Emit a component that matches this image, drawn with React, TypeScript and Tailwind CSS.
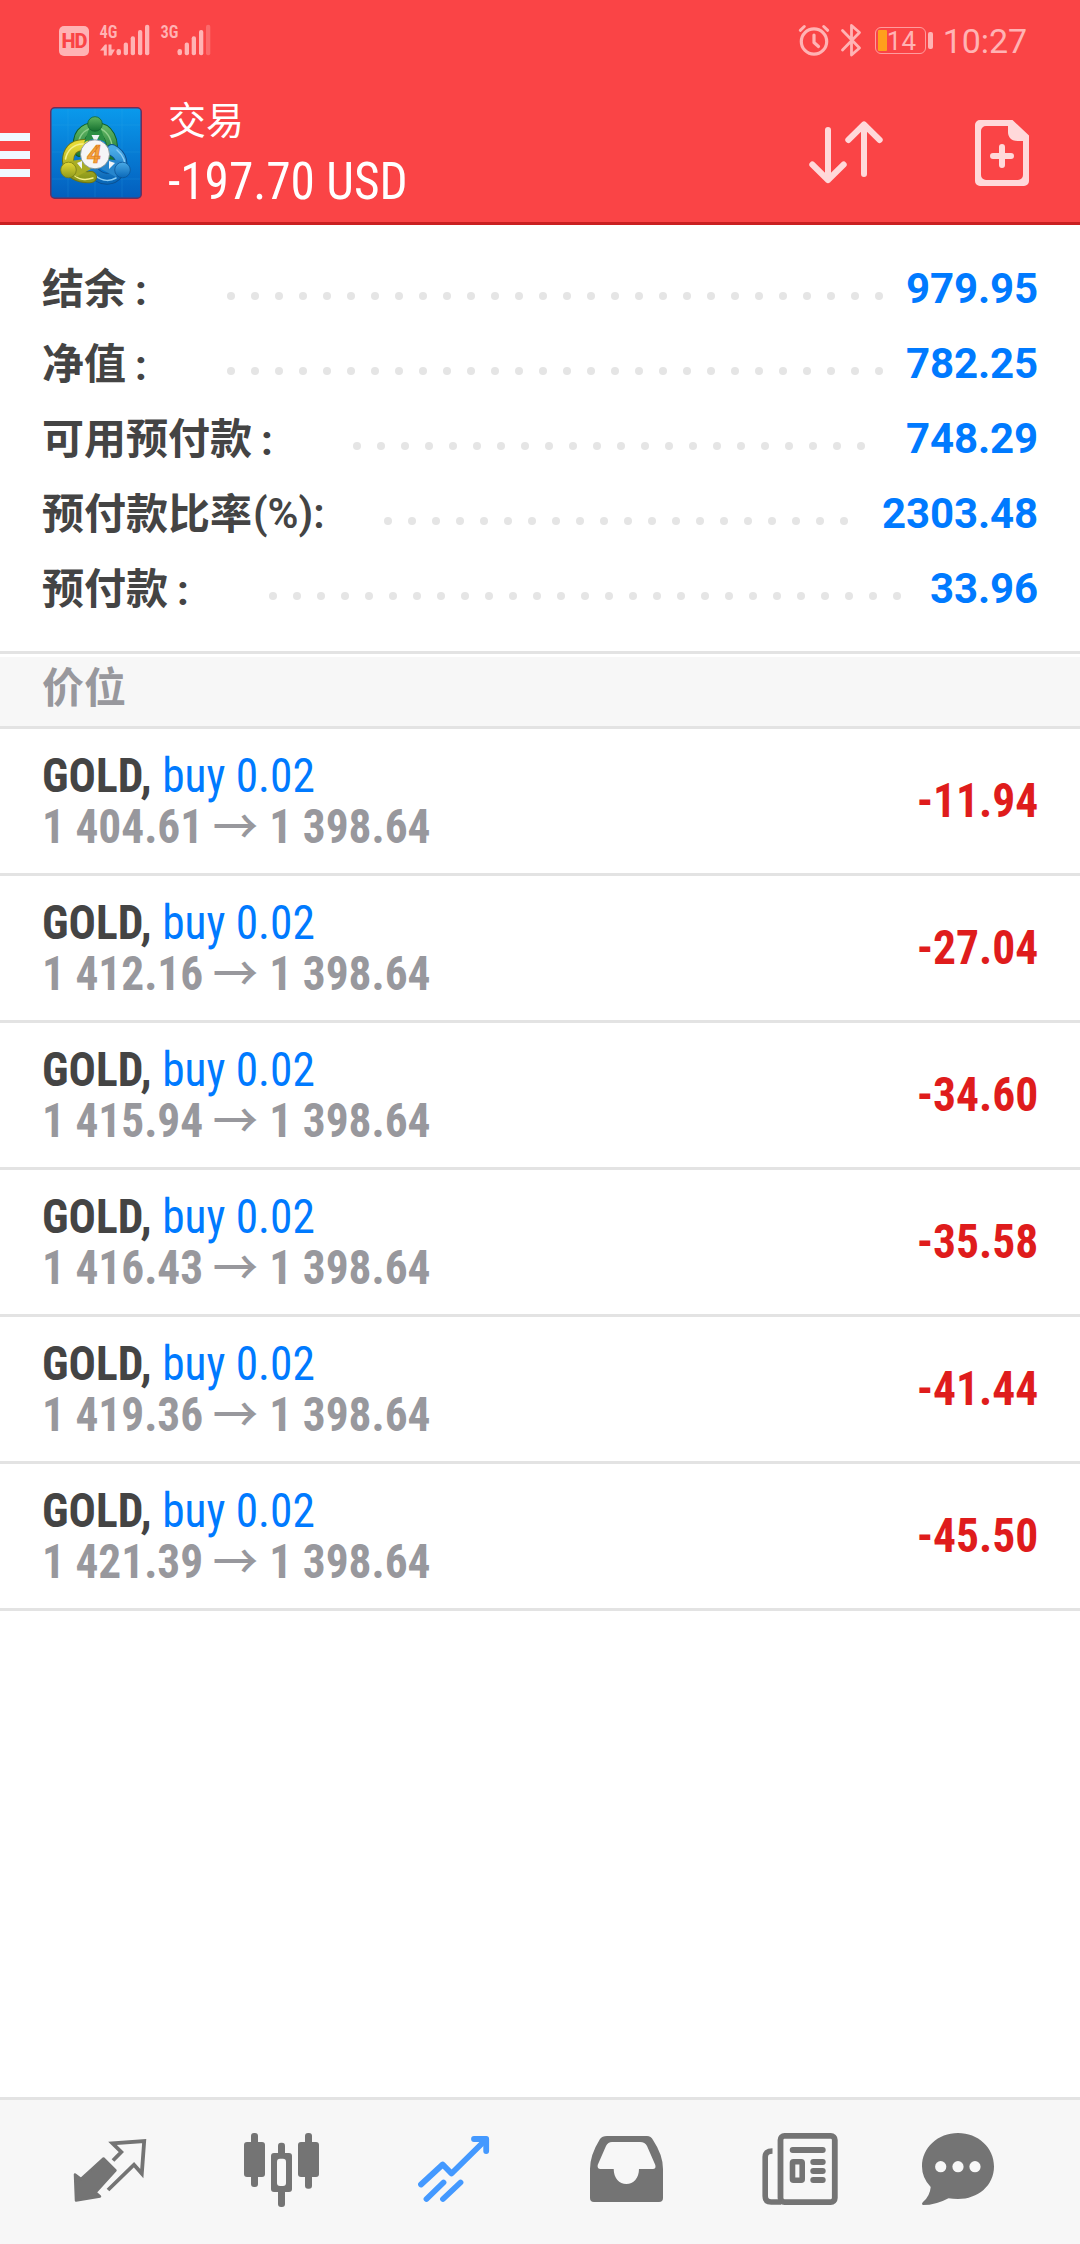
import type { ReactNode } from "react";

const SUMMARY = [
  { label: "结余", value: "979.95", dots: 28 },
  { label: "净值", value: "782.25", dots: 28 },
  { label: "可用预付款", value: "748.29", dots: 22 },
  { label: "预付款比率", suffix: "(%):", value: "2303.48", dots: 20 },
  { label: "预付款", value: "33.96", dots: 27 },
];

const POSITIONS = [
  { open: "1 404.61", current: "1 398.64", profit: "-11.94" },
  { open: "1 412.16", current: "1 398.64", profit: "-27.04" },
  { open: "1 415.94", current: "1 398.64", profit: "-34.60" },
  { open: "1 416.43", current: "1 398.64", profit: "-35.58" },
  { open: "1 419.36", current: "1 398.64", profit: "-41.44" },
  { open: "1 421.39", current: "1 398.64", profit: "-45.50" },
];

function Signal({ label, data, weak }: { label: string; data?: boolean; weak?: boolean }) {
  return (
    <svg className="overflow-visible" width="52" height="34" viewBox="0 0 52 34" fill="currentColor">
      <text
        x="0.5"
        y="15"
        className="font-['Roboto_Condensed'] text-[19px] font-semibold"
        textLength="18"
        lengthAdjust="spacingAndGlyphs"
      >
        {label}
      </text>
      {data && (
        <path d="M1 27.500L6 21.500h1.800v11H4.800v-5zM9.500 21.500h3v5H16L12.500 32.500h-3z" />
      )}
      <rect x="17.500" y="26" width="4.500" height="6.300" rx="2.200" />
      <rect x="24.700" y="19.500" width="4.300" height="12.800" rx="2" />
      <rect x="31.700" y="13.300" width="4.300" height="19" rx="2" />
      <rect x="39" y="7" width="4.300" height="25.300" rx="2" />
      <rect x="46" y="1.700" width="4.300" height="30.600" rx="2" opacity={weak ? 0.35 : 1} />
    </svg>
  );
}

function StatusBar() {
  return (
    <div className="flex h-[82px] items-start pt-[23px] pr-[53px] pl-[59px] font-[Roboto] text-[#ffb3b4]">
      <div className="mt-[3px] flex size-[30px] items-center justify-center rounded-[5px] bg-[#ffb3b4] text-[20px] leading-none font-extrabold tracking-[-1px] text-[#fa4446]">
        HD
      </div>
      <div className="ml-[10px] flex gap-[9px]">
        <Signal label="4G" data />
        <Signal label="3G" weak />
      </div>
      <div className="ml-auto flex items-start">
        <svg width="34" height="34" viewBox="0 0 34 34" fill="none" stroke="currentColor" strokeWidth="3.200" strokeLinecap="round">
          <circle cx="17" cy="18.500" r="12.700" />
          <path d="M17 12v7.500l4.500 4" strokeLinejoin="round" />
          <path d="M3.300 7.300L7.300 3.500M30.700 7.300l-4-3.800" strokeWidth="3" />
        </svg>
        <svg className="ml-2" width="24" height="34" viewBox="0 0 24 34" fill="none" stroke="currentColor" strokeWidth="2.800" strokeLinecap="round" strokeLinejoin="round">
          <path d="M3.500 7.500L20.500 25l-8 7V2.500l8 7L3.500 27" />
        </svg>
        <div className="mt-1 ml-3 flex h-[27px] w-[51px] items-center rounded-[6px] border-[1.5px] border-[#ffb3b4]/80 pl-[2px]">
          <span className="h-[21px] w-[9px] rounded-[1px] bg-[#ff9f1c]" />
          <span className="text-[26px] leading-none">14</span>
        </div>
        <span className="mt-[9px] ml-[2px] h-[17px] w-[5px] rounded-[2px] bg-[#ffb3b4]" />
        <span className="ml-[10px] text-[34px] leading-[36px] tracking-[-0.1px]">10:27</span>
      </div>
    </div>
  );
}

function AppLogo() {
  return (
    <svg width="92" height="92" viewBox="0 0 92 92">
      <defs>
        <linearGradient id="tile" x1="0" y1="0" x2="0" y2="1">
          <stop offset="0" stopColor="#0a9aec" />
          <stop offset="1" stopColor="#035ebd" />
        </linearGradient>
        <linearGradient id="green" x1="0" y1="0" x2="0" y2="1">
          <stop offset="0" stopColor="#5fb562" />
          <stop offset="1" stopColor="#15702f" />
        </linearGradient>
        <linearGradient id="yellow" x1="0" y1="0" x2="0" y2="1">
          <stop offset="0" stopColor="#e6da35" />
          <stop offset="1" stopColor="#8e9a1c" />
        </linearGradient>
        <linearGradient id="blue" x1="0" y1="0" x2="0" y2="1">
          <stop offset="0" stopColor="#4aaae6" />
          <stop offset="1" stopColor="#0a68b8" />
        </linearGradient>
      </defs>
      <rect x="0.750" y="0.750" width="90.500" height="90.500" rx="4" fill="url(#tile)" stroke="#6b2f5c" strokeWidth="1.500" />
      <path d="M18 2v88M45 2v88M72 2v88M2 18h88M2 45h88M2 72h88" stroke="#3fb0f0" strokeOpacity="0.180" />
      <g fill="none" strokeLinecap="round">
        <path d="M30 44C26 28 34 21 45.500 21S66 32 60 53" stroke="#0f5f2c" strokeWidth="12" />
        <path d="M30 44C26 28 34 21 45.500 21S66 32 60 53" stroke="url(#green)" strokeWidth="10" />
        <path d="M28 37C30 26 37 21 45.500 21S60 28 62 38" stroke="#8fcf8b" strokeWidth="1.500" />
        <path d="M62 43C72 48 74 58 68 66S50 74 42 63" stroke="#0a4f91" strokeWidth="12" />
        <path d="M62 43C72 48 74 58 68 66S50 74 42 63" stroke="url(#blue)" strokeWidth="10" />
        <path d="M67 43C74 49 76 56 74 60M46 69C53 75 61 74 66 71" stroke="#8accf5" strokeWidth="1.500" />
        <path d="M36 38C22 37 18 46 18 54C18 67 30 71 41 70" stroke="#6d7413" strokeWidth="12" />
        <path d="M36 38C22 37 18 46 18 54C18 67 30 71 41 70" stroke="url(#yellow)" strokeWidth="10" />
        <path d="M33 37C23 37 17 44 15.500 52M25 69C30 73 37 73 43 71" stroke="#f6f08c" strokeWidth="1.500" />
      </g>
      <path d="M39 22h12l5 14c-5-5-17-5-22 0z" fill="#2c8f44" />
      <path d="M20 54l15-2 6 10-15 8z" fill="#a9ad24" />
      <path d="M72 54l-15-2-6 10 15 8z" fill="#2786cd" />
      <path d="M45.500 36l-4-8h8zM32 54l-5 2 5 6zM59 54l6 2-6 6z" fill="#eef4f8" />
      <circle cx="45" cy="17" r="7.300" fill="url(#green)" stroke="#126630" strokeWidth="0.800" />
      <circle cx="18.500" cy="63" r="7.800" fill="url(#yellow)" stroke="#777d15" strokeWidth="0.800" />
      <circle cx="72.500" cy="63" r="7.800" fill="url(#blue)" stroke="#0b5598" strokeWidth="0.800" />
      <circle cx="45" cy="47.300" r="14.500" fill="#f5f5f7" stroke="#7b8b90" strokeWidth="0.800" />
      <text x="44" y="56" textAnchor="middle" className="font-[Roboto] text-[25px] font-bold italic" fill="#f6a43c" stroke="#dd7b20" strokeWidth="0.700">
        4
      </text>
    </svg>
  );
}

function Header() {
  return (
    <header className="h-[225px] border-b-[3px] border-[#c92021] bg-[#fa4446] text-white">
      <StatusBar />
      <div className="flex h-[140px] items-start">
        <div className="mt-[51px] flex w-[30px] flex-col gap-[10px]">
          <span className="h-2 bg-[#f0f8ff]" />
          <span className="h-2 bg-[#f0f8ff]" />
          <span className="h-2 bg-[#f0f8ff]" />
        </div>
        <div className="mt-[25px] ml-5">
          <AppLogo />
        </div>
        <div className="ml-[26px] w-[300px] pt-[11px]">
          <h1 className="font-['Noto_Sans_CJK_SC',sans-serif] text-[38px] leading-[50px]">交易</h1>
          <p className="mt-[9px] origin-left scale-x-[0.967] font-['Roboto_Condensed'] text-[51px] leading-[60px] whitespace-nowrap">
            -197.70 USD
          </p>
        </div>
        <svg className="mt-9 ml-auto" width="80" height="72" viewBox="0 0 80 72" fill="none" stroke="#ffd9da" strokeWidth="6" strokeLinecap="round" strokeLinejoin="round">
          <path d="M22 12v50M6.300 46.500L22 62l15.700-15.500" />
          <path d="M58 56V7M42.300 22L58 6.500 73.700 22" />
        </svg>
        <svg className="mt-9 mr-[48px] ml-[86px]" width="60" height="72" viewBox="0 0 60 72">
          <path
            d="M7 2h33.500L57 17.500V63a5 5 0 0 1-5 5H8a5 5 0 0 1-5-5V7a5 5 0 0 1 5-5zM14 8a5 5 0 0 0-5 5v44a5 5 0 0 0 5 5h32a5 5 0 0 0 5-5V23h-5c-8 0-10-5-10-9V8z"
            fill="#ffd9da"
            fillRule="evenodd"
          />
          <path d="M30 29v18M21 38h18" stroke="#ffd9da" strokeWidth="6" strokeLinecap="round" />
        </svg>
      </div>
    </header>
  );
}

function SummaryRow({ label, suffix, value, dots }: { label: string; suffix?: string; value: string; dots: number }) {
  return (
    <div className="flex h-[75px] items-center text-[42px] leading-[75px] font-bold whitespace-nowrap">
      <span className="flex items-baseline text-[#444]">
        <span className="relative top-px font-['Noto_Sans_CJK_SC',sans-serif] leading-[67px]">{label}</span>
        {suffix ? (
          <span className="ml-px font-semibold">{suffix}</span>
        ) : (
          <span className="relative top-[2px] w-[42px] pl-[9px]">:</span>
        )}
      </span>
      <span className="mt-[15px] ml-[59px] flex gap-4">
        {Array.from({ length: dots }, (_, i) => (
          <i key={i} className="size-2 rounded-full bg-[#e5e5e5]" />
        ))}
      </span>
      <span className="ml-auto tracking-[-0.1px] text-[#007aff]">{value}</span>
    </div>
  );
}

function PositionRow({ open, current, profit }: { open: string; current: string; profit: string }) {
  return (
    <li className="flex h-[147px] items-center justify-between border-b-[3px] border-[#e3e3e3] pr-[42px] pl-[42px] font-['Roboto_Condensed'] text-[48px] leading-[51px] font-bold whitespace-nowrap">
      <div className="origin-left scale-x-[0.945]">
        <p className="text-[#444]">
          GOLD, <span className="font-normal text-[#007aff]">buy 0.02</span>
        </p>
        <p className="flex items-baseline text-[#98989d]">
          {open}
          <span className="relative top-px mr-3 ml-[10px] w-12 font-['Noto_Sans_CJK_SC',sans-serif] leading-[30px] font-medium">→</span>
          {current}
        </p>
      </div>
      <span className="relative -top-px origin-right scale-x-[0.948] text-[#df1c1c]">{profit}</span>
    </li>
  );
}

function NavIcon({ active, children }: { active?: boolean; children: ReactNode }) {
  return (
    <button className={`flex w-[172px] justify-center ${active ? "text-[#4499ff]" : "text-[#747474]"}`}>
      <svg width="96" height="96" viewBox="0 0 96 96" fill="currentColor">
        {children}
      </svg>
    </button>
  );
}

function BottomNav() {
  return (
    <nav className="flex h-[147px] items-center border-t-[3px] border-[#e3e3e3] bg-[#f7f7f7] pl-6">
      <NavIcon>
        <path d="M13 50.500L19 55 41.500 34.500 53.500 46.500 33.500 68.300 38 72.500 14 76.500z" stroke="currentColor" strokeWidth="2.500" strokeLinejoin="round" />
        <path d="M51 36.500L59.300 28l-8.800-8.700L82.200 17l-2.400 32.500L72 40.700 46 66" fill="none" stroke="currentColor" strokeWidth="3.800" />
      </NavIcon>
      <NavIcon>
        <rect x="17" y="9" width="7" height="54" rx="3" />
        <rect x="10" y="18" width="21" height="35" rx="3" />
        <rect x="44" y="18.700" width="7" height="64.300" rx="3" />
        <rect x="37" y="29" width="21" height="39" rx="3" />
        <rect x="43" y="34.700" width="9" height="27.300" rx="3" fill="#f7f7f7" />
        <rect x="71" y="9" width="7" height="55.700" rx="3" />
        <rect x="64" y="18" width="21" height="35" rx="3" />
      </NavIcon>
      <NavIcon active>
        <g fill="none" stroke="currentColor" strokeWidth="5.800" strokeLinecap="round" strokeLinejoin="round">
          <path d="M15 60.500L36.700 40.500l8.800 9L80 15.500" />
          <path d="M68 15h12.200v12" />
          <path d="M20.500 75L37.500 58.500M37 75L54.500 58.500" />
        </g>
      </NavIcon>
      <NavIcon>
        <path d="M29 12h40q4 0 6 4 10 15 10 29v29q0 4-4 4H16q-4 0-4-4V45q0-14 10-30 2-3 7-3z" />
        <path d="M34 18h28q5 0 7 4l8.300 19q1 4-2.500 4H61c0 9-5.500 15-12.600 15S35.700 54 35.700 45H22.500q-3.500 0-2.800-4L28 22q2-4 6-4z" fill="#f7f7f7" />
      </NavIcon>
      <NavIcon>
        <rect x="30.500" y="11.900" width="54.300" height="66.200" rx="4" fill="none" stroke="currentColor" strokeWidth="5.800" />
        <path d="M22.500 27q-7.300 0-7.300 6v39q0 6 6 6h10" fill="none" stroke="currentColor" strokeWidth="5.600" />
        <rect x="42.500" y="37.800" width="9.700" height="18.400" rx="1" fill="none" stroke="currentColor" strokeWidth="5.600" />
        <path d="M42.700 26h30M63.300 38h9.400M63.300 47h9.400M63.300 56h9.400" stroke="currentColor" strokeWidth="6" strokeLinecap="round" />
      </NavIcon>
      <NavIcon>
        <path d="M36 9c20 0 36 14.500 36 33.500S56 75 36 75q-5 0-9.500-.8Q14 81 1 81q-2-1 0-3 7-6 7.700-15Q0 54 0 42.500C0 23.500 16 9 36 9z" />
        <circle cx="18.700" cy="42.700" r="5.600" fill="#f7f7f7" />
        <circle cx="36" cy="42.700" r="5.600" fill="#f7f7f7" />
        <circle cx="53" cy="42.700" r="5.600" fill="#f7f7f7" />
      </NavIcon>
    </nav>
  );
}

export default function App() {
  return (
    <div className="flex h-[2244px] w-[1080px] flex-col overflow-hidden bg-white font-[Roboto]">
      <Header />
      <section className="h-[429px] border-b-[3px] border-[#e3e3e3] pt-[26px] pr-[42px] pl-[42px]">
        {SUMMARY.map((row) => (
          <SummaryRow key={row.label} {...row} />
        ))}
      </section>
      <h2 className="mt-[3px] h-[72px] border-b-[3px] border-[#e3e3e3] bg-[#f7f7f7] pl-[42px] font-['Noto_Sans_CJK_SC',sans-serif] text-[42px] leading-[55px] font-bold text-[#98989d]">
        价位
      </h2>
      <ul className="flex-1">
        {POSITIONS.map((position) => (
          <PositionRow key={position.open} {...position} />
        ))}
      </ul>
      <BottomNav />
    </div>
  );
}
